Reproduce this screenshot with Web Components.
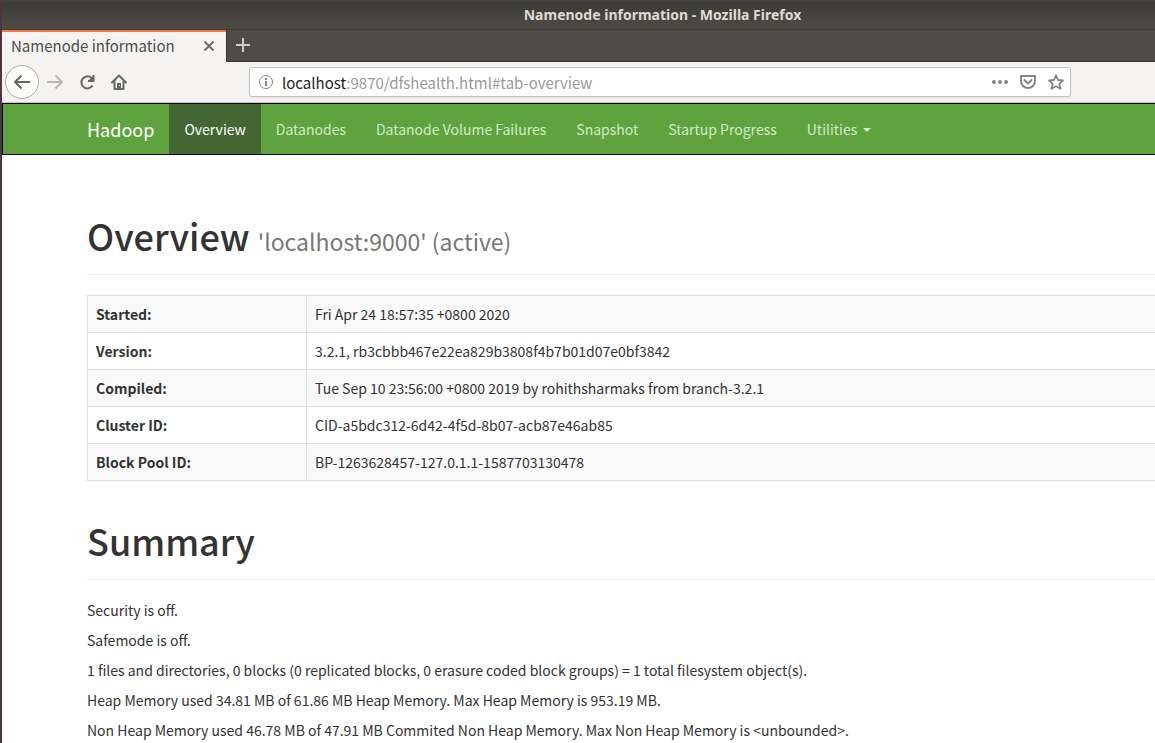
<!DOCTYPE html>
<html lang="en">
<head>
<meta charset="utf-8">
<title>Namenode information</title>
<style>
html, body { margin: 0; }
body {
  font: 14px/20px "Noto Sans CJK SC", "Noto Sans", sans-serif;
  color: #333; background: #fff;
  min-height: 100vh; overflow: hidden;
}
</style>
</head>
<body>
<browser-window heading="Namenode information - Mozilla Firefox">
  <browser-tabs slot="tabs" label="Namenode information"></browser-tabs>
  <browser-toolbar slot="toolbar" host="localhost" path=":9870/dfshealth.html#tab-overview"></browser-toolbar>
  <nav-bar brand="Hadoop">
    <nav-item active>Overview</nav-item>
    <nav-item>Datanodes</nav-item>
    <nav-item>Datanode Volume Failures</nav-item>
    <nav-item>Snapshot</nav-item>
    <nav-item>Startup Progress</nav-item>
    <nav-item menu>Utilities</nav-item>
  </nav-bar>
  <dfs-overview></dfs-overview>
</browser-window>

<script>
function define(name, render) {
  customElements.define(name, class extends HTMLElement {
    constructor() {
      super();
      this.attachShadow({ mode: 'open' });
    }
    connectedCallback() {
      this.shadowRoot.innerHTML = render(this);
    }
  });
}

define('browser-window', el => `
<style>
:host { display: block; min-height: 100vh; box-sizing: border-box; border-left: 2px solid #4d363d; }
.title {
  height: 30px; box-sizing: border-box; padding-left: 168px; text-align: center;
  font: bold 14px/30px "Noto Sans", sans-serif; color: #dfdbd2;
  background: linear-gradient(#45443e, #3c3b37 3px, #4e4b44 28px, #3c3b37 30px);
}
</style>
<div class="title">${el.getAttribute('heading')}</div>
<slot name="tabs"></slot>
<slot name="toolbar"></slot>
<slot></slot>`);

define('browser-tabs', el => `
<style>
:host { display: flex; height: 32px; background: #504c45; box-shadow: inset 0 -1px #3a3834; font-size: 15px; }
.tab {
  display: flex; align-items: center; justify-content: space-between; width: 224px; box-sizing: border-box;
  padding: 0 10px 2px 9px; border-top: 2px solid #f07746; background: #f4f3f1; color: #4c4c4c;
  box-shadow: 1px 0 #3a3834;
}
button { display: grid; place-items: center; padding: 0; border: 0; background: none; }
.new { width: 34px; height: 30px; }
svg { display: block; fill: none; }
</style>
<div class="tab"><span>${el.getAttribute('label')}</span>
<button aria-label="Close tab"><svg width="14" height="14" stroke="#6a6a67" stroke-width="1.8"><path d="M2.500 2.500l9 9M11.500 2.500l-9 9"/></svg></button></div>
<button class="new" aria-label="New tab"><svg width="16" height="16" stroke="#cfccc5" stroke-width="2"><path d="M8 1v14M1 8h14"/></svg></button>`);

define('browser-toolbar', el => `
<style>
:host { display: flex; align-items: center; height: 40px; padding: 0 84px 0 3px; background: #f4f3f1; border-bottom: 1px solid #c6c3c0; }
button { display: grid; place-items: center; width: 32px; height: 32px; padding: 0; border: 0; background: none; color: #666664; }
.back { width: 34px; height: 34px; box-sizing: border-box; border: 1px solid #aaa9a7; border-radius: 50%; background: #fcfcfb; }
.off { color: #b8b7b4; }
svg { display: block; fill: none; stroke: currentColor; stroke-width: 2; }
.url {
  flex: 1; display: flex; align-items: center; min-width: 0; height: 30px; box-sizing: border-box; margin-left: 114px;
  padding: 0 6px 0 8px; border: 1px solid #c5c2be; border-radius: 3px; background: #fff;
  box-shadow: 0 1px 2px #0001; color: #858583;
}
.url button { width: 28px; color: #858583; }
.url button:last-child { width: 16px; margin-left: 6px; }
.address { flex: 1; margin-left: 8px; padding-top: 2px; font-size: 15px; color: #999; white-space: nowrap; }
.address b { font-weight: normal; color: #222; }
</style>
<button class="back" aria-label="Back"><svg width="18" height="16"><path d="M17 8H2M8.500 1.500L2 8l6.500 6.500" stroke-linejoin="round"/></svg></button>
<button class="off" aria-label="Forward"><svg width="18" height="16"><path d="M1 8h15M9.500 1.500L16 8l-6.500 6.500" stroke-linejoin="round"/></svg></button>
<button aria-label="Reload"><svg width="16" height="16"><path d="M13.500 11.500A6 6 0 1 1 12.500 4"/><path d="M14.500 1v6H9" stroke-width="2"/><path d="M10 6l4-4v4z" fill="currentColor" stroke="none"/></svg></button>
<button aria-label="Home"><svg width="16" height="16"><path d="M1 8.500L8 1.500l7 7M3.500 7.500V15h9V7.500" stroke-linejoin="round" stroke-linecap="round"/><path d="M6 14V9h4v5z" fill="currentColor" stroke="none"/><path d="M8 11h1v1H8z" fill="#f4f3f1" stroke="none"/></svg></button>
<div class="url">
<svg width="16" height="16" style="stroke-width:1"><circle cx="8" cy="8" r="6.500"/><path d="M8 7v5M8 4v2" style="stroke-width:2"/></svg>
<span class="address"><b>${el.getAttribute('host')}</b>${el.getAttribute('path')}</span>
<button aria-label="Page actions"><svg width="16" height="16" style="fill:currentColor;stroke:none"><circle cx="2" cy="8" r="2"/><circle cx="8" cy="8" r="2"/><circle cx="14" cy="8" r="2"/></svg></button>
<button aria-label="Save to Pocket"><svg width="16" height="16"><path d="M1 2h14v5a7 7 0 0 1-14 0zM4.500 6L8 9.500 11.500 6" stroke-linejoin="round" stroke-linecap="round"/></svg></button>
<button aria-label="Bookmark"><svg width="16" height="16"><path d="M8 1.300l2 4.700 5 .5-3.700 3.300 1.200 4.900L8 12.200l-4.500 2.500 1.200-4.900L1 6.500 6 6z" stroke-linejoin="round" style="stroke-width:1.800"/></svg></button>
</div>`);

define('nav-bar', el => `
<style>
:host { display: block; border: 1px solid #080808; border-right: 0; background: #5fa33e; }
nav { display: flex; height: 50px; padding-left: 69px; white-space: nowrap; }
.brand { padding: 15px; font-size: 18px; color: #fff; text-decoration: none; }
</style>
<nav><a class="brand" href="#">${el.getAttribute('brand')}</a><slot></slot></nav>`);

define('nav-item', el => `
<style>
:host { display: flex; }
a { display: flex; align-items: center; gap: 6px; padding: 0 15px; color: #d2ecc6; text-decoration: none; }
:host([active]) a { background: #446633; color: #fff; }
:host([menu]) a::after { content: ""; margin-top: 2px; border: 4px solid transparent; border-top-color: currentColor; border-bottom: 0; }
</style>
<a href="#"><slot></slot></a>`);

define('page-header', () => `
<style>
:host { display: block; margin: 40px 0 20px; padding-bottom: 19px; border-bottom: 1px solid #eee; }
h1 { margin: 0; font-size: 36px; line-height: 39px; font-weight: 500; }
::slotted(small) { font-size: 23px; font-weight: 400; line-height: 24px; color: #777; }
</style>
<h1><slot></slot></h1>`);

const facts = [
  ['Started:', 'Fri Apr 24 18:57:35 +0800 2020'],
  ['Version:', '3.2.1, rb3cbbb467e22ea829b3808f4b7b01d07e0bf3842'],
  ['Compiled:', 'Tue Sep 10 23:56:00 +0800 2019 by rohithsharmaks from branch-3.2.1'],
  ['Cluster ID:', 'CID-a5bdc312-6d42-4f5d-8b07-acb87e46ab85'],
  ['Block Pool ID:', 'BP-1263628457-127.0.1.1-1587703130478'],
];
const summary = [
  'Security is off.',
  'Safemode is off.',
  '1 files and directories, 0 blocks (0 replicated blocks, 0 erasure coded block groups) = 1 total filesystem object(s).',
  'Heap Memory used 34.81 MB of 61.86 MB Heap Memory. Max Heap Memory is 953.19 MB.',
  'Non Heap Memory used 46.78 MB of 47.91 MB Commited Non Heap Memory. Max Non Heap Memory is &lt;unbounded&gt;.',
];

define('dfs-overview', () => `
<style>
:host { display: flow-root; padding: 21px 0 0 85px; }
table { width: 100%; border-collapse: collapse; border: 1px solid #ddd; border-right: 0; table-layout: fixed; }
th, td { padding: 8px; border: 1px solid #ddd; text-align: left; }
td { border-right: 0; }
th { width: 202px; font-weight: bold; }
tr:nth-child(odd) { background: #f9f9f9; }
p { margin: 0 0 10px; }
p:last-child { margin: 0; }
</style>
<page-header>Overview <small>'localhost:9000' (active)</small></page-header>
<table><tbody>${facts.map(([k, v]) => `<tr><th scope="row">${k}</th><td>${v}</td></tr>`).join('')}</tbody></table>
<page-header>Summary</page-header>
${summary.map(t => `<p>${t}</p>`).join('')}`);
</script>
</body>
</html>
